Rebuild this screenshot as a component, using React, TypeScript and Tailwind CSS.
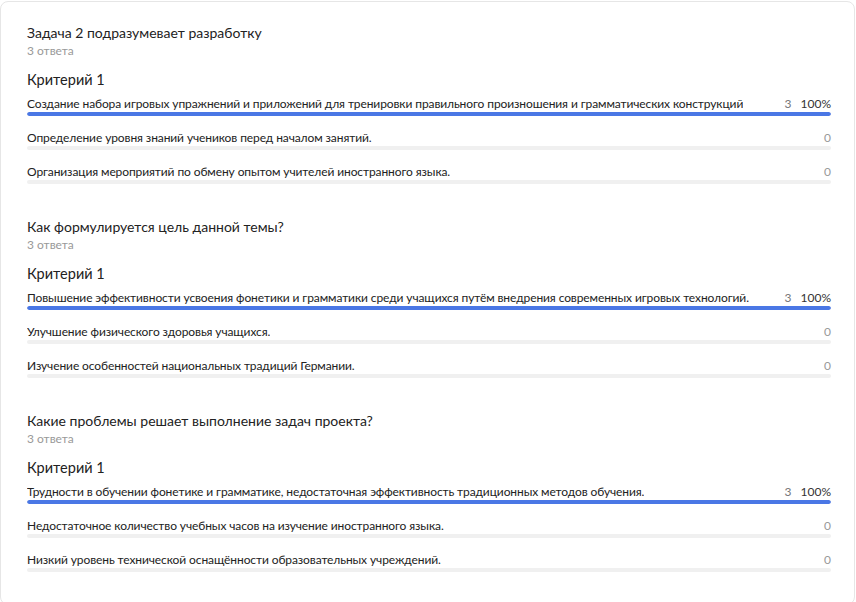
import React from 'react';

type Option = { text: string; count: number };
type Question = { title: string; answers: string; criterion: string; options: Option[] };

const QUESTIONS: Question[] = [
  {
    title: 'Задача 2 подразумевает разработку',
    answers: '3 ответа',
    criterion: 'Критерий 1',
    options: [
      { text: 'Создание набора игровых упражнений и приложений для тренировки правильного произношения и грамматических конструкций', count: 3 },
      { text: 'Определение уровня знаний учеников перед началом занятий.', count: 0 },
      { text: 'Организация мероприятий по обмену опытом учителей иностранного языка.', count: 0 },
    ],
  },
  {
    title: 'Как формулируется цель данной темы?',
    answers: '3 ответа',
    criterion: 'Критерий 1',
    options: [
      { text: 'Повышение эффективности усвоения фонетики и грамматики среди учащихся путём внедрения современных игровых технологий.', count: 3 },
      { text: 'Улучшение физического здоровья учащихся.', count: 0 },
      { text: 'Изучение особенностей национальных традиций Германии.', count: 0 },
    ],
  },
  {
    title: 'Какие проблемы решает выполнение задач проекта?',
    answers: '3 ответа',
    criterion: 'Критерий 1',
    options: [
      { text: 'Трудности в обучении фонетике и грамматике, недостаточная эффективность традиционных методов обучения.', count: 3 },
      { text: 'Недостаточное количество учебных часов на изучение иностранного языка.', count: 0 },
      { text: 'Низкий уровень технической оснащённости образовательных учреждений.', count: 0 },
    ],
  },
];

function OptionRow({ option, total }: { option: Option; total: number }) {
  const pct = total ? Math.round((option.count / total) * 100) : 0;
  return (
    <div className="flex flex-col">
      <div className="flex items-center justify-between gap-3 h-4 text-[12px] leading-4">
        <span className="text-[#222] whitespace-nowrap tracking-[-0.1px] min-w-0 truncate">{option.text}</span>
        {option.count > 0 ? (
          <span className="flex gap-[9px] text-[#333] shrink-0">
            <span className="text-[#777]">{option.count}</span>
            <span>{pct}%</span>
          </span>
        ) : (
          <span className="text-[#999] shrink-0">0</span>
        )}
      </div>
      <div className="h-1 rounded-full bg-[#f0f0f0] overflow-hidden">
        <div className="h-full rounded-full bg-[#4a77e5]" style={{ width: `${pct}%` }} />
      </div>
    </div>
  );
}

export default function App() {
  return (
    <div className="w-[856px] h-[602px] overflow-hidden bg-white" style={{ fontFamily: 'Lato, Roboto, sans-serif' }}>
      <div className="mt-px w-[855px] border border-[#e6e6e6] rounded-lg pt-[21px] pl-[26px] pr-[23px] pb-8 flex flex-col gap-[33px]">
        {QUESTIONS.map((q, i) => {
          const total = q.options.reduce((s, o) => s + o.count, 0);
          return (
            <section key={i} className="flex flex-col">
              <h2 className="text-[14px] leading-5 text-[#222]">{q.title}</h2>
              <p className="text-[12px] leading-4 text-[#999]">{q.answers}</p>
              <h3 className="mt-[11px] text-[14.5px] leading-5 text-[#222]">{q.criterion}</h3>
              <div className="mt-[6px] flex flex-col gap-[14px]">
                {q.options.map((o, j) => (
                  <OptionRow key={j} option={o} total={total} />
                ))}
              </div>
            </section>
          );
        })}
      </div>
    </div>
  );
}
